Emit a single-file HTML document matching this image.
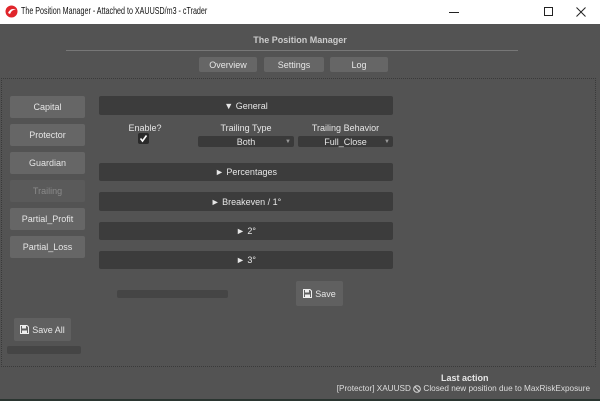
<!DOCTYPE html>
<html><head><style>
*{box-sizing:border-box;margin:0;padding:0}
body{width:600px;height:401px;background:#535353;font-family:"Liberation Sans",sans-serif;font-size:9px;color:#e6e6e6;position:relative;overflow:hidden}
.a{position:absolute}
.tb{left:0;top:0;width:600px;height:24px;background:#fff;color:#111;font-size:11px}
.btn{background:#666;border-radius:2px;display:flex;align-items:center;justify-content:center}
.hd{background:#3c3c3c;border-radius:2px;display:flex;align-items:center;justify-content:center;left:99px;width:294px}
.dd{background:#3a3a3a;border-radius:2px;display:flex;align-items:center;justify-content:center;height:11px;top:136px}
.c{text-align:center}
</style></head><body>
<div class="a tb">
<svg class="a" style="left:5px;top:5px" width="13" height="13" viewBox="0 0 13 13"><circle cx="6.5" cy="6.5" r="6" fill="#e0252b"/><path d="M3 8 Q6 2 11 5 Q7 4 5 9Z" fill="#fff"/></svg>
<div class="a" style="left:21px;top:5px;font-size:10.5px;transform:scaleX(0.68);transform-origin:left;white-space:nowrap">The Position Manager - Attached to XAUUSD/m3 - cTrader</div>
<div class="a" style="left:449px;top:12px;width:10px;height:1px;background:#222"></div>
<div class="a" style="left:544px;top:7px;width:9px;height:9px;border:1px solid #222"></div>
<svg class="a" style="left:576px;top:7px" width="10" height="10" viewBox="0 0 10 10"><path d="M0.5 0.5L9.5 9.5M9.5 0.5L0.5 9.5" stroke="#222" stroke-width="1"/></svg>
</div>
<div class="a c" style="left:0;width:600px;top:35px;font-size:9px;font-weight:bold;color:#ccc">The Position Manager</div>
<div class="a" style="left:66px;top:50px;width:452px;height:1px;background:#777"></div>
<div class="a btn" style="left:199px;top:57px;width:58px;height:15px">Overview</div>
<div class="a btn" style="left:264px;top:57px;width:60px;height:15px">Settings</div>
<div class="a btn" style="left:330px;top:57px;width:58px;height:15px">Log</div>
<div class="a" style="left:1px;top:78px;width:595px;height:289px;border:1px dotted #3a3a3a"></div>
<div class="a btn" style="left:10px;top:96px;width:75px;height:22px">Capital</div>
<div class="a btn" style="left:10px;top:124px;width:75px;height:22px">Protector</div>
<div class="a btn" style="left:10px;top:152px;width:75px;height:22px">Guardian</div>
<div class="a btn" style="left:10px;top:180px;width:75px;height:22px;background:#5a5a5a;color:#8a8a8a">Trailing</div>
<div class="a btn" style="left:10px;top:208px;width:75px;height:22px">Partial_Profit</div>
<div class="a btn" style="left:10px;top:236px;width:75px;height:22px">Partial_Loss</div>
<div class="a hd" style="top:96px;height:19px">▼ General</div>
<div class="a c" style="left:120px;width:50px;top:123px">Enable?</div>
<div class="a" style="left:138px;top:133px;width:11px;height:11px;background:#2a2a2a;border-radius:2px"><svg width="11" height="11" viewBox="0 0 11 11"><path d="M2.5 5.5L4.5 8L8.5 2.5" stroke="#fff" stroke-width="1.6" fill="none"/></svg></div>
<div class="a c" style="left:198px;width:96px;top:123px">Trailing Type</div>
<div class="a c" style="left:298px;width:95px;top:123px">Trailing Behavior</div>
<div class="a dd" style="left:198px;width:96px">Both<span class="a" style="right:3px;font-size:6px;color:#999">▼</span></div>
<div class="a dd" style="left:298px;width:95px">Full_Close<span class="a" style="right:3px;font-size:6px;color:#999">▼</span></div>
<div class="a hd" style="top:163px;height:18px">► Percentages</div>
<div class="a hd" style="top:192px;height:19px">► Breakeven / 1°</div>
<div class="a hd" style="top:222px;height:18px">► 2°</div>
<div class="a hd" style="top:251px;height:18px">► 3°</div>
<div class="a" style="left:117px;top:290px;width:111px;height:8px;background:#454545;border-radius:2px"></div>
<div class="a btn" style="left:296px;top:281px;width:47px;height:25px;background:#606060"><svg width="9" height="9" viewBox="0 0 9 9" style="margin-right:3px"><path d="M0.5 0.5H7L8.5 2V8.5H0.5Z" fill="none" stroke="#eee"/><rect x="2" y="1" width="4" height="2.5" fill="#eee"/><rect x="2" y="5.5" width="5" height="3" fill="#eee"/></svg>Save</div>
<div class="a btn" style="left:14px;top:318px;width:57px;height:23px;background:#606060"><svg width="9" height="9" viewBox="0 0 9 9" style="margin-right:3px"><path d="M0.5 0.5H7L8.5 2V8.5H0.5Z" fill="none" stroke="#eee"/><rect x="2" y="1" width="4" height="2.5" fill="#eee"/><rect x="2" y="5.5" width="5" height="3" fill="#eee"/></svg>Save All</div>
<div class="a" style="left:7px;top:346px;width:74px;height:8px;background:#454545;border-radius:2px"></div>
<div class="a" style="left:441px;top:373px;font-weight:bold">Last action</div>
<div class="a" style="right:10px;top:384px;color:#ddd;font-size:8.2px;display:flex;align-items:center">[Protector] XAUUSD&nbsp;<svg width="8" height="8" viewBox="0 0 8 8"><circle cx="4" cy="4" r="3.3" fill="none" stroke="#ddd"/><path d="M1.7 1.7L6.3 6.3" stroke="#ddd"/></svg>&nbsp;Closed new position due to MaxRiskExposure</div>
<div class="a" style="left:0;top:399px;width:600px;height:2px;background:#2a3530"></div>
</body></html>
